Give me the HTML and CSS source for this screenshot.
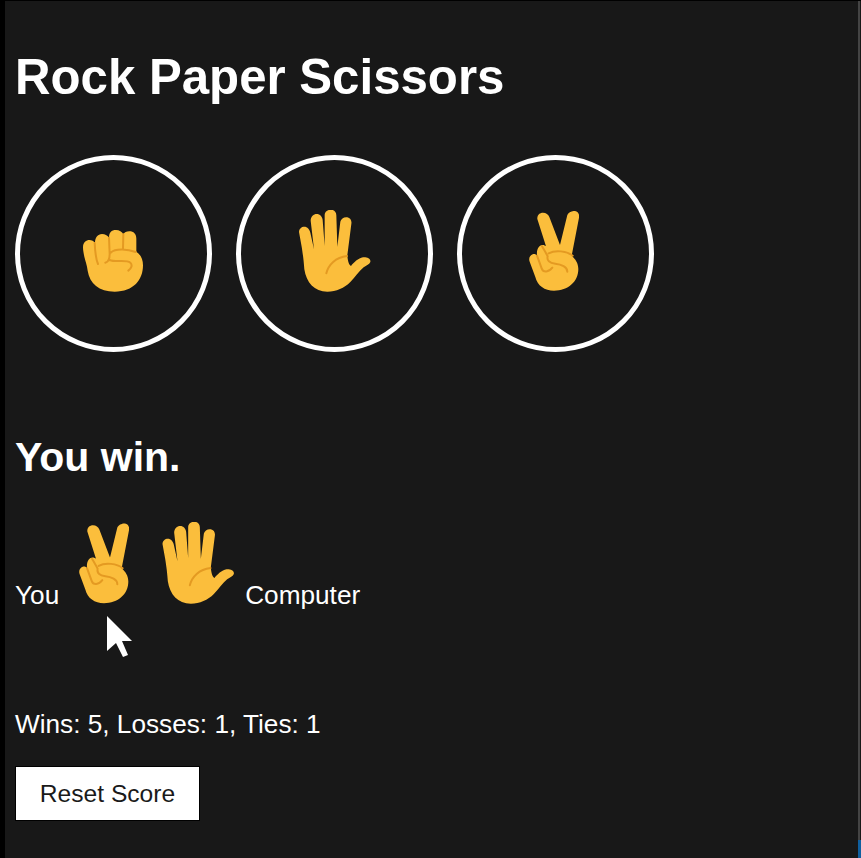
FILE: index.html
```html
<!DOCTYPE html>
<html lang="en">
<head>
<meta charset="utf-8">
<title>Rock Paper Scissors</title>
<link rel="stylesheet" href="styles.css">
</head>
<body>
<svg class="defs" width="0" height="0" aria-hidden="true">
  <defs>
    <symbol id="rock" viewBox="70 118 180 186">
      <path class="skin" d="M70 170C70 155 80 148 89 148C96 148 103 151 106 157C106 141 114 130 127 130C136 130 143 134 148 141C148 126 155 118 169 118C179 118 187 123 191 131C194 125 200 122 209 122C222 122 230 130 230 144V183C243 192 250 205 250 224C250 268 222 303 165 303C118 303 90 278 84 240C82 222 77 212 74 198C72 188 70 180 70 170Z"/>
      <path class="crease" d="M105 157C106 178 108 204 115 220M148 141L150 190C150 206 146 214 137 216M191 131L190 174M153 186C168 172 205 176 228 184M150 208C168 216 200 206 212 216C220 224 214 234 206 240"/>
    </symbol>
    <symbol id="paper" viewBox="60 60 216 246">
      <path class="skin" d="M60 126C60 116 68 110 76 110C85 110 92 118 94 128L105 178L95 92C95 80 104 72 113 72C123 72 130 80 131 90L137 168L137 74C137 66 146 59 155 59C165 59 172 66 172 76L175 170L184 95C186 86 196 80 205 82C214 84 219 92 217 102L205 196C206 208 208 224 216 228C224 218 238 204 252 202C264 201 276 206 274 216C272 222 262 226 254 232C240 244 228 262 214 276C196 294 172 305 145 305C106 305 82 278 76 238C74 210 72 196 68 170Z"/>
      <path class="crease" d="M142 250C148 224 170 202 204 198"/>
    </symbol>
    <symbol id="scissors" viewBox="81 64 150 240">
      <path class="skin" d="M106 88C105 76 113 69 123 69C132 69 139 74 142 82L174 166L196 76C199 68 211 63 219 64C229 66 233 75 231 84L209 198C220 208 229 220 229 238C229 276 198 303 156 303C128 303 106 288 100 262L83 216C79 206 84 197 92 194C98 192 102 194 105 198C103 178 112 166 122 166C126 166 130 168 132 170Z"/>
      <path class="crease" d="M105 198L119 236C124 250 140 248 151 234M120 170C126 180 132 190 137 200M140 191C160 180 195 184 212 198M137 200C134 212 142 220 160 222C178 224 196 232 196 246"/>
    </symbol>
  </defs>
</svg>
<main class="app">
  <h1 class="title">Rock Paper Scissors</h1>
  <div class="choices">
    <button class="choice" type="button"><svg class="hand hand-rock"><use href="#rock"/></svg></button>
    <button class="choice" type="button"><svg class="hand hand-paper"><use href="#paper"/></svg></button>
    <button class="choice" type="button"><svg class="hand hand-scissors"><use href="#scissors"/></svg></button>
  </div>
  <h2 class="outcome">You win.</h2>
  <div class="round">
    <span class="label">You</span>
    <svg class="hand played-you"><use href="#scissors"/></svg>
    <svg class="hand played-computer"><use href="#paper"/></svg>
    <span class="label">Computer</span>
  </div>
  <p class="score">Wins: 5, Losses: 1, Ties: 1</p>
  <button class="reset" type="button">Reset Score</button>
</main>
<svg class="cursor" viewBox="0 0 26 42" aria-hidden="true"><path d="M0 0L25 25H15L21 39L16 41L9 27L0 35Z"/></svg>
<div class="edge"></div>
<div class="edge-active"></div>
</body>
</html>
```
FILE: styles.css
```css
* { box-sizing: border-box; }
html, body { margin: 0; height: 100%; }
body {
  background: #181818;
  border-left: 5px solid #000;
  border-top: 1px solid #000;
  color: #fff;
  font-family: "Liberation Sans", Arial, sans-serif;
  overflow: hidden;
  position: relative;
}
.defs { position: absolute; }
.app { padding: 0 10px; }
.title {
  margin: 0;
  padding-top: 48px;
  font-size: 49.2px;
  line-height: 56px;
  font-weight: 700;
}
.choices { display: flex; gap: 24px; margin-top: 50px; }
.choice {
  width: 197px;
  height: 197px;
  padding: 0;
  border: 5px solid #fff;
  border-radius: 50%;
  background: transparent;
  display: flex;
  align-items: center;
  justify-content: center;
}
.hand { display: block; fill: none; }
.hand-rock { width: 60px; height: 62px; margin-top: 14px; margin-right: 2px; }
.hand-paper { width: 72px; height: 82px; margin-top: -6px; }
.hand-scissors { width: 50px; height: 80px; margin-top: -6px; margin-right: 4px; }
.skin { fill: #fbbe3c; }
.crease { fill: none; stroke: #e49a22; stroke-width: 6; stroke-linecap: round; stroke-linejoin: round; }
.outcome {
  margin: 82px 0 0;
  font-size: 41px;
  line-height: 47px;
  font-weight: 700;
}
.round { display: flex; align-items: flex-end; margin-top: 41px; }
.label { font-size: 26.2px; line-height: 30px; }
.played-you { width: 50px; height: 81px; margin: 0 0 6px 20px; }
.played-computer { width: 73px; height: 82px; margin: 0 10px 6px 33px; }
.score { margin: 99px 0 0; font-size: 26.2px; line-height: 30px; }
.reset {
  display: block;
  margin-top: 27px;
  width: 185px;
  height: 55px;
  padding: 0;
  border: 1px solid #000;
  background: #fff;
  color: #1a1a1a;
  font: 400 24.6px "Liberation Sans", Arial, sans-serif;
}
.cursor { position: absolute; left: 102px; top: 615px; width: 26px; height: 42px; fill: #fff; }
.edge { position: absolute; top: 0; right: 1px; bottom: 0; width: 2px; background: #444; }
.edge-active { position: absolute; right: 0; bottom: 0; width: 3px; height: 18px; background: #0f5f9f; }
```
